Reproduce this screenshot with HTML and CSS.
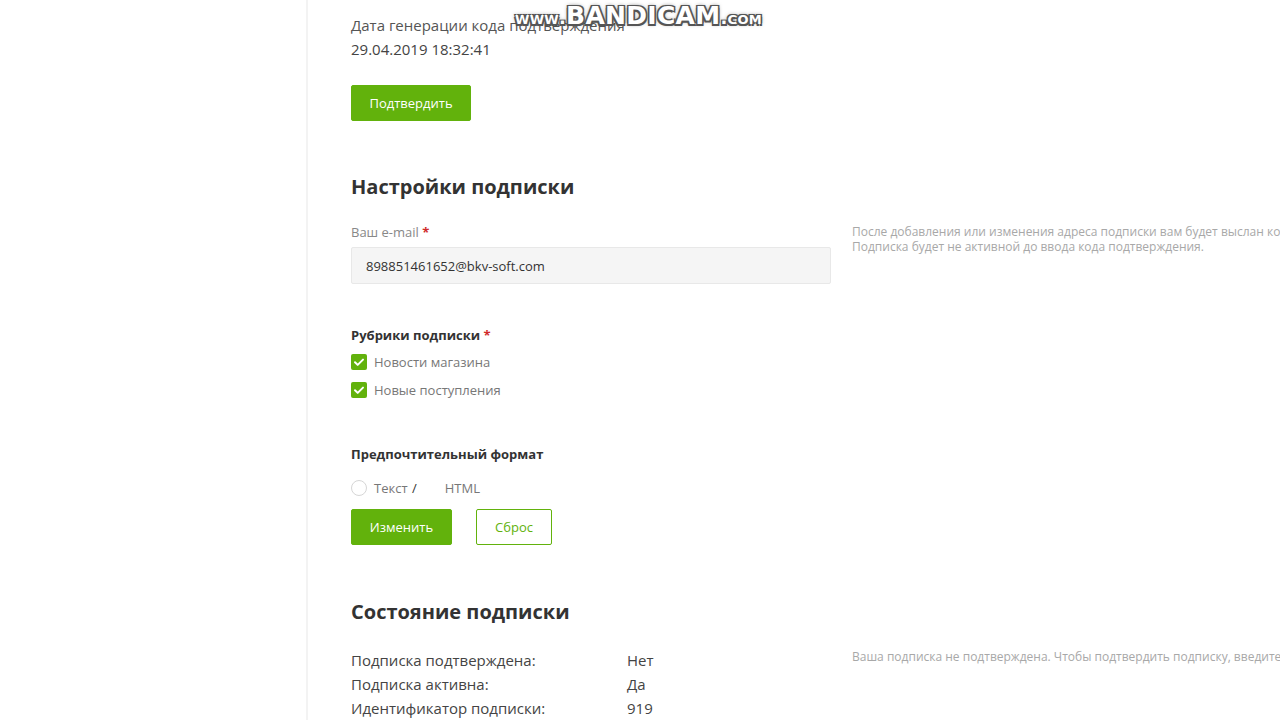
FILE: index.html
```html
<!DOCTYPE html>
<html lang="ru">

<head>
  <meta charset="UTF-8">
  <meta name="viewport" content="width=device-width, initial-scale=1.0">
  <title>Подписка</title>
  <link rel="stylesheet" href="styles.css">
</head>

<body>
  <div class="page">
    <aside class="sidebar"></aside>
    <main class="content">
      <section class="confirm">
        <p class="gen-title">Дата генерации кода подтверждения</p>
        <p class="gen-date">29.04.2019 18:32:41</p>
        <button class="btn btn-green btn-confirm">Подтвердить</button>
      </section>

      <section class="settings">
        <h2 class="title">Настройки подписки</h2>
        <div class="row">
          <div class="col-main">
            <label class="label">Ваш e-mail <span class="req">*</span></label>
            <div class="input">898851461652@bkv-soft.com</div>
          </div>
          <div class="hint">
            После добавления или изменения адреса подписки вам будет выслан код подтверждения.<br>
            Подписка будет не активной до ввода кода подтверждения.
          </div>
        </div>

        <div class="group rubrics">
          <div class="bold-label">Рубрики подписки <span class="req">*</span></div>
          <div class="check-row">
            <span class="checkbox"><svg viewBox="0 0 16 16" width="16" height="16"><path d="M4 8.3l2.7 2.6L12 5.6" fill="none" stroke="#fff" stroke-width="2" stroke-linecap="round" stroke-linejoin="round"/></svg></span>
            <span class="check-text">Новости магазина</span>
          </div>
          <div class="check-row">
            <span class="checkbox"><svg viewBox="0 0 16 16" width="16" height="16"><path d="M4 8.3l2.7 2.6L12 5.6" fill="none" stroke="#fff" stroke-width="2" stroke-linecap="round" stroke-linejoin="round"/></svg></span>
            <span class="check-text">Новые поступления</span>
          </div>
        </div>

        <div class="group format">
          <div class="bold-label">Предпочтительный формат</div>
          <div class="radio-row">
            <span class="radio"></span>
            <span class="check-text">Текст <span class="slash">/</span></span>
            <span class="check-text html">HTML</span>
          </div>
          <div class="actions">
            <button class="btn btn-green btn-change">Изменить</button>
            <button class="btn btn-outline">Сброс</button>
          </div>
        </div>
      </section>

      <section class="status">
        <h2 class="title">Состояние подписки</h2>
        <div class="row">
          <div class="col-main status-list">
            <div class="status-row"><span class="status-key">Подписка подтверждена:</span><span>Нет</span></div>
            <div class="status-row"><span class="status-key">Подписка активна:</span><span>Да</span></div>
            <div class="status-row"><span class="status-key">Идентификатор подписки:</span><span>919</span></div>
          </div>
          <div class="hint">
            Ваша подписка не подтверждена. Чтобы подтвердить подписку, введите код подтверждения.
          </div>
        </div>
      </section>
    </main>
  </div>
  <div class="watermark"><span class="wm-small">www.</span>BANDICAM<span class="wm-small">.com</span></div>
</body>

</html>
```

FILE: styles.css
```css
:root {
  --green: #62b20c;
  --txt-color: #333;
}

* {
  margin: 0;
  padding: 0;
  box-sizing: border-box;
  font-family: "Open Sans", Arial, sans-serif;
}

html,
body {
  width: 1280px;
  height: 720px;
  overflow: hidden;
  background: #fff;
}

body {
  color: var(--txt-color);
  font-size: 13px;
}

.page {
  display: flex;
  min-height: 720px;
}

.sidebar {
  width: 308px;
  flex-shrink: 0;
  border-right: 2px solid #f3f3f3;
}

.content {
  flex: 1;
  padding: 13px 0 0 43px;
  min-width: 0;
  overflow: hidden;
}

.gen-title,
.gen-date {
  font-size: 15px;
  line-height: 24px;
  color: #555;
}

.gen-date {
  color: #444;
}

.btn {
  display: inline-flex;
  align-items: center;
  justify-content: center;
  height: 36px;
  font-size: 13px;
  border: 1px solid var(--green);
  border-radius: 2px;
  cursor: pointer;
}

.btn-green {
  background: var(--green);
  color: #fff;
}

.btn-outline {
  background: #fff;
  color: var(--green);
  width: 76px;
}

.btn-confirm {
  width: 120px;
  margin-top: 24px;
}

.btn-change {
  width: 101px;
}

.title {
  font-size: 20px;
  line-height: 28px;
  font-weight: 700;
  color: #333;
}

.settings .title {
  margin-top: 52px;
}

.row {
  display: flex;
  align-items: flex-start;
  gap: 21px;
}

.settings .row {
  margin-top: 22px;
}

.col-main {
  width: 480px;
  flex-shrink: 0;
}

.label {
  display: block;
  line-height: 18px;
  color: #888;
}

.req {
  color: #d02a2a;
  font-weight: 700;
}

.input {
  margin-top: 6px;
  height: 37px;
  padding: 0 14px;
  display: flex;
  align-items: center;
  background: #f5f5f5;
  border: 1px solid #e8e8e8;
  border-radius: 2px;
  color: #333;
}

.hint {
  font-size: 12px;
  line-height: 15px;
  color: #a8a8a8;
  white-space: nowrap;
  padding-top: 1px;
}

.group .bold-label {
  font-weight: 700;
  line-height: 18px;
  color: #333;
}

.rubrics {
  margin-top: 42px;
}

.rubrics .bold-label {
  margin-bottom: 4px;
}

.check-row {
  display: flex;
  align-items: center;
  gap: 7px;
  height: 28px;
}

.checkbox {
  width: 16px;
  height: 16px;
  border-radius: 2px;
  background: var(--green);
  display: flex;
}

.check-text {
  color: #777;
}

.slash {
  color: #333;
  margin-left: 1px;
}

.format {
  margin-top: 41px;
}

.radio-row {
  display: flex;
  align-items: center;
  gap: 7px;
  height: 24px;
  margin-top: 13px;
}

.radio {
  width: 16px;
  height: 16px;
  border-radius: 50%;
  border: 1px solid #d6d6d6;
  background: #fff;
}

.html {
  margin-left: 21px;
}

.actions {
  display: flex;
  gap: 24px;
  margin-top: 9px;
}

.status .title {
  margin-top: 53px;
}

.status .row {
  margin-top: 22px;
}

.status-row {
  display: flex;
  font-size: 15px;
  line-height: 24px;
  color: #444;
}

.status-key {
  width: 276px;
}

/* screen recorder watermark */
.watermark {
  position: absolute;
  left: 515px;
  top: 3px;
  font-family: "DejaVu Sans", sans-serif;
  font-weight: 700;
  font-size: 25px;
  line-height: 26px;
  letter-spacing: 0.3px;
  color: #fff;
  text-shadow:
    -1.5px -1.5px 0 #555, 1.5px -1.5px 0 #555,
    -1.5px 1.5px 0 #555, 1.5px 1.5px 0 #555,
    0 0 4px rgba(0, 0, 0, 0.6);
}

.watermark .wm-small {
  font-family: "DejaVu Sans", sans-serif;
  font-size: 18px;
  font-variant: small-caps;
}
```
